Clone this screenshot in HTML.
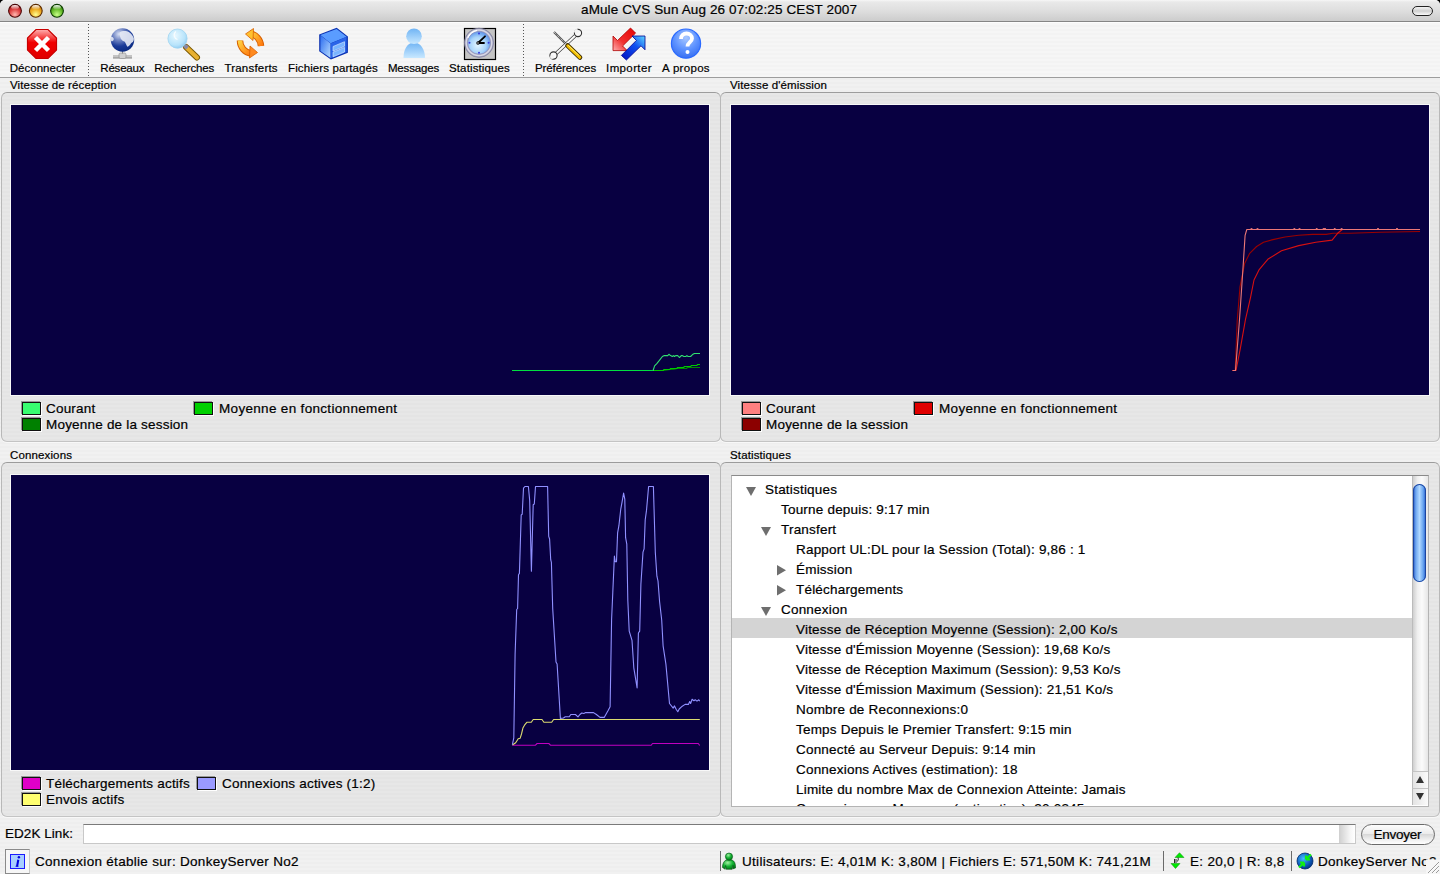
<!DOCTYPE html>
<html><head><meta charset="utf-8">
<style>
*{box-sizing:border-box;margin:0;padding:0}
html,body{width:1440px;height:874px;overflow:hidden;background:#000}
body{font-family:"Liberation Sans",sans-serif;font-size:13.5px;letter-spacing:.2px;color:#000;position:relative;-webkit-text-stroke:.2px #000}
.a{position:absolute}
#win{position:absolute;left:0;top:0;width:1440px;height:874px;background:repeating-linear-gradient(#f1f1f1 0,#f1f1f1 2px,#eeeeee 2px,#eeeeee 4px);border-radius:5px 5px 0 0;overflow:hidden}
#title{left:0;top:0;width:1440px;height:22px;background:linear-gradient(#f7f7f7 0,#e9e9e9 2px,#dedede 11px,#cecece 20px);border-bottom:1px solid #858585}
#ttxt{left:581px;top:2px;white-space:nowrap;font-size:13.5px;line-height:15px;letter-spacing:.12px}
.tl{width:14px;height:14px;border-radius:50%;top:4px}
#tool{left:0;top:22px;width:1440px;height:56px;background:repeating-linear-gradient(#f6f6f6 0,#f6f6f6 2px,#f3f3f3 2px,#f3f3f3 4px);border-top:1px solid #fdfdfd;border-bottom:1px solid #9c9c9c}
.tb{font-size:11.5px;line-height:13px;top:62px;white-space:nowrap;width:100px;text-align:center}
.sep{top:24px;height:53px;width:1px;background:repeating-linear-gradient(#555 0,#555 1px,transparent 1px,transparent 3px)}
.lbl{font-size:11.5px;line-height:13px;letter-spacing:.13px;white-space:nowrap}
.box{border:1px solid #b8b8b8;border-top-color:#9c9c9c;border-bottom-color:#c4c4c4;border-radius:6px;background:repeating-linear-gradient(#e7e7e7 0,#e7e7e7 2px,#e4e4e4 2px,#e4e4e4 4px);box-shadow:0 1px 0 #f8f8f8}
.graph{background:#080041;outline:1px solid #f8f8f8}
.row{white-space:nowrap;line-height:15px}
.leg{white-space:nowrap;line-height:15px}
.sw{width:19px;height:13px;border:1px solid #111;box-shadow:-1px -1px 0 #9a9a9a, 1px 1px 0 #fff}
</style></head><body>
<div id="win">
 <div id="title" class="a"></div>
 <div id="ttxt" class="a">aMule CVS Sun Aug 26 07:02:25 CEST 2007</div>
 <div id="tool" class="a"></div>
 <!-- traffic lights -->
 <svg class="a" style="left:0;top:0" width="72" height="22">
  <defs>
   <radialGradient id="tlR" cx=".5" cy=".8" r=".75"><stop offset="0" stop-color="#ffb8b0"/><stop offset=".55" stop-color="#e04848"/><stop offset="1" stop-color="#a81010"/></radialGradient>
   <radialGradient id="tlY" cx=".5" cy=".8" r=".75"><stop offset="0" stop-color="#ffff90"/><stop offset=".55" stop-color="#f0b028"/><stop offset="1" stop-color="#c07000"/></radialGradient>
   <radialGradient id="tlG" cx=".5" cy=".8" r=".75"><stop offset="0" stop-color="#c8ff88"/><stop offset=".55" stop-color="#6cc030"/><stop offset="1" stop-color="#2a7a00"/></radialGradient>
   <linearGradient id="tlH" x1="0" y1="0" x2="0" y2="1"><stop offset="0" stop-color="#fff" stop-opacity=".95"/><stop offset="1" stop-color="#fff" stop-opacity=".05"/></linearGradient>
  </defs>
  <circle cx="15" cy="10.8" r="6.4" fill="url(#tlR)" stroke="#4a0808" stroke-width="1.1"/>
  <circle cx="35.8" cy="10.8" r="6.4" fill="url(#tlY)" stroke="#5a2a00" stroke-width="1.1"/>
  <circle cx="57" cy="10.8" r="6.4" fill="url(#tlG)" stroke="#0a3a00" stroke-width="1.1"/>
  <ellipse cx="15" cy="7.3" rx="3.8" ry="2.2" fill="url(#tlH)"/>
  <ellipse cx="35.8" cy="7.3" rx="3.8" ry="2.2" fill="url(#tlH)"/>
  <ellipse cx="57" cy="7.3" rx="3.8" ry="2.2" fill="url(#tlH)"/>
 </svg>
 <div class="a" style="left:1412px;top:6px;width:21px;height:10px;border:1.5px solid #222;border-radius:5px;background:linear-gradient(#f4f4f4,#cfcfcf 50%,#fafafa)"></div>
 <svg class="a" style="left:0;top:0" width="720" height="64">
  <defs>
   <linearGradient id="gRed" x1="0" y1="0" x2="0" y2="1"><stop offset="0" stop-color="#ffb0b0"/><stop offset=".45" stop-color="#f00000"/><stop offset="1" stop-color="#e00000"/></linearGradient>
   <radialGradient id="gGlobe" cx=".35" cy=".25" r=".8"><stop offset="0" stop-color="#d8e0f4"/><stop offset=".35" stop-color="#6a80c0"/><stop offset=".65" stop-color="#1a3a98"/><stop offset="1" stop-color="#0a2a80"/></radialGradient>
   <radialGradient id="gLens" cx=".4" cy=".35" r=".7"><stop offset="0" stop-color="#e8f8ff"/><stop offset=".7" stop-color="#b8e4fb"/><stop offset="1" stop-color="#8cc8f0"/></radialGradient>
   <linearGradient id="gOr" x1="0" y1="0" x2="1" y2="1"><stop offset="0" stop-color="#ffd040"/><stop offset="1" stop-color="#ff7a10"/></linearGradient>
   <linearGradient id="gBlueL" x1="0" y1="0" x2="1" y2="1"><stop offset="0" stop-color="#2a6cf0"/><stop offset="1" stop-color="#b8dcff"/></linearGradient>
   <linearGradient id="gPers" x1="0" y1="0" x2="0" y2="1"><stop offset="0" stop-color="#70b4f4"/><stop offset="1" stop-color="#c8e8ff"/></linearGradient>
   <radialGradient id="gFace" cx=".45" cy=".6" r=".65"><stop offset="0" stop-color="#e4f6ff"/><stop offset=".55" stop-color="#a8d4fa"/><stop offset="1" stop-color="#4a88e8"/></radialGradient>
   <radialGradient id="gHelp" cx=".5" cy=".3" r=".7"><stop offset="0" stop-color="#a8c8ff"/><stop offset=".6" stop-color="#5a90ff"/><stop offset="1" stop-color="#3a70f0"/></radialGradient>
  </defs>
  <!-- deconnecter -->
  <path d="M36 29.5h12l8.5 8.5v12l-8.5 8.5h-12l-8.5-8.5v-12z" fill="url(#gRed)" stroke="#c80000" stroke-width="1.2"/>
  <path d="M35.5 37.5l13 13M48.5 37.5l-13 13" stroke="#fff" stroke-width="4.5"/>
  <!-- reseaux globe -->
  <rect x="113" y="55" width="19" height="3" fill="#c4c4c4"/>
  <rect x="113" y="57.5" width="19" height="1" fill="#8a8a8a"/>
  <rect x="119" y="53" width="7" height="5.5" rx="1.5" fill="#d0d0d0" stroke="#8a8a8a" stroke-width=".6"/>
  <rect x="122" y="50.5" width="1" height="3" fill="#888"/>
  <circle cx="122.5" cy="40" r="11.7" fill="url(#gGlobe)"/>
  <path d="M119.5 32.5c2-1.5 5-1.8 7.5-1.2 3 1 5.5 3.5 6.8 6.8.3 1.5-.2 3-1 4-1 .5-2 1.5-2.5 2.5-.8 1-2 2-3 2.2-1-1.5-1.5-3.5-2.5-5-1.5-.5-3-1.5-4-3-.5-1.5-1-3-1.3-4.3z M110.8 37c1.2-.5 2.5.5 3 1.8.2 1.2-.8 2.3-2 2.6-.7-.3-1-1-1.1-1.8z" fill="#e4e8f4" opacity=".92"/>
  <!-- recherches -->
  <path d="M186 47l11 10.5" stroke="#7a5800" stroke-width="6" stroke-linecap="round"/>
  <path d="M186.5 47.5l10.5 10" stroke="#e8b030" stroke-width="4.2" stroke-linecap="round"/>
  <path d="M184.5 45.5l3 2.5" stroke="#8888a8" stroke-width="4"/>
  <circle cx="177.5" cy="38.6" r="9.6" fill="url(#gLens)" stroke="#a0d4f0" stroke-width=".8"/>
  <path d="M176 31.5a4.5 4.5 0 0 0 1.5 8" stroke="#fff" stroke-width="1.2" fill="none" opacity=".8"/>
  <!-- transferts -->
  <path d="M250 33.5c6 1 10.5 6 11 12.5" stroke="#d86000" stroke-width="6.5" fill="none"/>
  <path d="M250 33.5c6 1 10.5 6 11 12.5" stroke="url(#gOr)" stroke-width="4.5" fill="none"/>
  <path d="M245.5 34l8-5.5-.5 12z" fill="#ffc030" stroke="#d86000" stroke-width=".8"/>
  <path d="M240 40.5c0 7 5 12 11 13" stroke="#d86000" stroke-width="6.5" fill="none"/>
  <path d="M240 40.5c0 7 5 12 11 13" stroke="url(#gOr)" stroke-width="4.5" fill="none"/>
  <path d="M257.5 52.5l-8 5.5.5-12z" fill="#ff8a20" stroke="#d86000" stroke-width=".8"/>
  <!-- fichiers partages -->
  <path d="M336.7 27.8l11.2 8.7v16.3l-17 6.6-11.7-8.1v-16.7z" fill="#0a30b0"/>
  <path d="M336.6 29l10 7.7-16 6.6-10.2-8.3z" fill="#5a9cff"/>
  <path d="M320.4 35.2l10.2 8.3v14.6l-10.2-7.2z" fill="url(#gBlueL)"/>
  <path d="M330.6 43.4l16-6.6v15.2l-16 6.5z" fill="#2a64e8"/>
  <path d="M333 46.5l11.5-4.8v4.6l-11.5 4.8z M333 52.2l11.5-4.8v4.6l-11.5 4.8z" fill="#7ab4ff" stroke="#e0f0ff" stroke-width=".6"/>
  <!-- messages -->
  <path d="M403.5 58c0-9 4-15.5 10.5-15.5s11 6.5 11 15.5z" fill="url(#gPers)"/>
  <circle cx="414" cy="36.3" r="7.8" fill="url(#gPers)"/>
  <!-- statistiques -->
  <rect x="464.5" y="28.5" width="31" height="31" fill="#c4c4c4" stroke="#000" stroke-width="1.2"/>
  <circle cx="479" cy="42.8" r="14.6" fill="#a4a4bc" stroke="#8080a0" stroke-width=".8"/>
  <circle cx="479" cy="42.8" r="12.8" fill="none" stroke="#d8d8e6" stroke-width="1.4"/><path d="M468 38a12 12 0 0 1 9-7.5" stroke="#fff" stroke-width="1.4" fill="none"/>
  <circle cx="479" cy="42.8" r="11.3" fill="url(#gFace)" stroke="#9090c0" stroke-width=".6"/>
  <g fill="#3a3ae0"><circle cx="479" cy="33.5" r="1"/><circle cx="479" cy="52.7" r="1"/><circle cx="469.5" cy="42.8" r="1"/><circle cx="488.6" cy="42.8" r="1"/></g>
  <path d="M478 43l7-6.7M478 43h6" stroke="#000" stroke-width="1.8" stroke-linecap="round"/>
  <circle cx="478" cy="43" r="1.7" fill="#000"/><circle cx="478" cy="43" r=".7" fill="#fff"/>
  <!-- preferences -->
  <path d="M554 32l12.5 12.5" stroke="#555" stroke-width="2.2"/>
  <path d="M554 32l12.5 12.5" stroke="#e8e8e8" stroke-width="1" stroke-dasharray="1 1"/>
  <path d="M576.5 34.5l-21.5 20" stroke="#333" stroke-width="3.4"/>
  <path d="M576.5 34.5l-21.5 20" stroke="#fafafa" stroke-width="2.2"/>
  <circle cx="578" cy="33" r="3.6" fill="#fafafa" stroke="#333" stroke-width="1.1"/>
  <circle cx="576.3" cy="31.3" r="2.2" fill="#f4f4f4"/>
  <circle cx="553.5" cy="55.5" r="3.6" fill="#fafafa" stroke="#333" stroke-width="1.1"/>
  <circle cx="552" cy="57" r="2" fill="#f4f4f4"/>
  <path d="M567.5 45.5l12.5 12" stroke="#3a2a00" stroke-width="4.6" stroke-linecap="round"/>
  <path d="M567.8 45.8l12 11.5" stroke="#f4c000" stroke-width="3" stroke-linecap="round"/>
  <path d="M568.5 45.5l10 9.5" stroke="#fff4a0" stroke-width=".8" stroke-linecap="round"/>
  <!-- importer -->
  <defs>
   <linearGradient id="gImpR" x1="1" y1="0" x2="0" y2="1"><stop offset="0" stop-color="#e80000"/><stop offset=".6" stop-color="#f03030"/><stop offset="1" stop-color="#ffb0b0"/></linearGradient>
   <linearGradient id="gImpB" x1="0" y1="1" x2="1" y2="0"><stop offset="0" stop-color="#0010c0"/><stop offset=".6" stop-color="#1050f0"/><stop offset="1" stop-color="#60d8ff"/></linearGradient>
  </defs>
  <path d="M613 50.6V36l4.5 4.5 13-12.5 5.1 5.1-13 12.9 4.6 4.6z" fill="url(#gImpR)" stroke="#b00000" stroke-width=".8"/>
  <path d="M645 36h-13l4.4 4.4-15 15 5 4.6 14.6-14.2 4 4z" fill="url(#gImpB)" stroke="#000090" stroke-width=".8"/>
  <!-- a propos -->
  <circle cx="686" cy="43.6" r="14.6" fill="url(#gHelp)" stroke="#2a6aff" stroke-width="1.2"/>
  <path d="M681 39c0-3.5 2.5-5.5 5.5-5.5s5.5 2 5.5 5c0 3.5-4.5 4-4.5 8" stroke="#fff" stroke-width="3.8" fill="none"/>
  <circle cx="687.5" cy="52" r="2" fill="#fff"/>
 </svg>
 <!-- toolbar labels -->
 <div class="a tb" style="left:-7.5px;letter-spacing:0.035px">Déconnecter</div>
 <div class="a tb" style="left:72.3px;letter-spacing:-0.2px">Réseaux</div>
 <div class="a tb" style="left:134.2px;letter-spacing:-0.15px">Recherches</div>
 <div class="a tb" style="left:201.1px;letter-spacing:0.2px">Transferts</div>
 <div class="a tb" style="left:283px;letter-spacing:0.1px">Fichiers partagés</div>
 <div class="a tb" style="left:363.5px;letter-spacing:-0.15px">Messages</div>
 <div class="a tb" style="left:429.5px;letter-spacing:0.13px">Statistiques</div>
 <div class="a tb" style="left:515.5px;letter-spacing:-0.08px">Préférences</div>
 <div class="a tb" style="left:579px;letter-spacing:0.38px">Importer</div>
 <div class="a tb" style="left:636px;letter-spacing:0.3px">A propos</div>
 <div class="a sep" style="left:88px"></div>
 <div class="a sep" style="left:523px"></div>
 <!-- section labels -->
 <div class="a lbl" style="left:10px;top:79px">Vitesse de réception</div>
 <div class="a lbl" style="left:730px;top:79px">Vitesse d'émission</div>
 <div class="a lbl" style="left:10px;top:449px">Connexions</div>
 <div class="a lbl" style="left:730px;top:449px">Statistiques</div>
 <!-- boxes -->
 <div class="a box" style="left:1px;top:92px;width:720px;height:350px"></div>
 <div class="a box" style="left:720px;top:92px;width:720px;height:350px"></div>
 <div class="a box" style="left:1px;top:462px;width:720px;height:355px"></div>
 <div class="a box" style="left:720px;top:462px;width:720px;height:355px"></div>
 <div class="a graph" style="left:11px;top:105px;width:698px;height:290px"></div>
 <div class="a graph" style="left:731px;top:105px;width:698px;height:290px"></div>
 <div class="a graph" style="left:11px;top:475px;width:698px;height:295px"></div>
 <!-- legends -->
 <div class="a sw" style="left:22px;top:402px;background:#38fd70"></div>
 <div class="a leg" style="left:46px;top:401px">Courant</div>
 <div class="a sw" style="left:22px;top:418px;background:#008000"></div>
 <div class="a leg" style="left:46px;top:417px">Moyenne de la session</div>
 <div class="a sw" style="left:194px;top:402px;background:#00d000"></div>
 <div class="a leg" style="left:219px;top:401px;letter-spacing:.32px">Moyenne en fonctionnement</div>

 <div class="a sw" style="left:742px;top:402px;background:#ff8080"></div>
 <div class="a leg" style="left:766px;top:401px">Courant</div>
 <div class="a sw" style="left:742px;top:418px;background:#8c0000"></div>
 <div class="a leg" style="left:766px;top:417px">Moyenne de la session</div>
 <div class="a sw" style="left:914px;top:402px;background:#e00000"></div>
 <div class="a leg" style="left:939px;top:401px;letter-spacing:.32px">Moyenne en fonctionnement</div>

 <div class="a sw" style="left:22px;top:777px;background:#e000c8"></div>
 <div class="a leg" style="left:46px;top:776px">Téléchargements actifs</div>
 <div class="a sw" style="left:22px;top:793px;background:#ffff70"></div>
 <div class="a leg" style="left:46px;top:792px">Envois actifs</div>
 <div class="a sw" style="left:197px;top:777px;background:#9a9aff"></div>
 <div class="a leg" style="left:222px;top:776px">Connexions actives (1:2)</div>
 <svg class="a" style="left:0;top:0" width="1440" height="874" fill="none" stroke-width="1.1" stroke-linejoin="round">
  <!-- reception -->
  <polyline stroke="#008a00" points="512,370.5 663.3,370.5 670.1,369.5 674,369.3 677.4,368.5 686.7,368.5 687.2,367.5 700,367.5"/>
  <polyline stroke="#00c800" points="512,370.5 663.3,370.5 663.8,369.5 669.7,369.5 670.4,368.5 677,368.5 677.4,367.5 683.8,367.5 684.2,366.5 690.8,366.5 691.3,365.5 696.9,365.5 697.4,364.5 700,364.5"/>
  <polyline stroke="#30e070" points="512,370.5 653.1,370.5 654.6,365.8 657,363.3 659.4,360.4 662.4,356.5 664.3,355.6 667.7,355.6 668.9,354.3 670.6,355.6 672.3,356.5 673.5,355.6 674.5,356.5 675.7,355.6 677.7,355.6 679.4,357.5 681.3,355.6 682.5,355.6 683.8,356.5 685.7,356.5 686.9,355.6 688.1,356.5 690.6,356.5 692.5,354.6 694.4,353.5 700,353.5"/>
  <polyline stroke="#00e040" points="512,370.5 653,370.5"/>
  <!-- emission -->
  <polyline stroke="#9a0000" points="1232.5,370.5 1235.2,370.5 1237.2,321 1240,286.8 1244.6,263.6 1249.7,253.3 1256.6,246.5 1263.5,242.2 1272.9,239.6 1284.9,237 1298.7,235.3 1312.4,234.4 1326.1,234.4 1333,233.2 1350,233.2 1380,232.3 1420,231.5"/>
  <polyline stroke="#d81010" points="1232.5,370.5 1236,370.5 1240.3,348.6 1245.5,319.4 1250.6,297.1 1254,280 1259.2,269.6 1267.8,259.3 1281.5,250.8 1298.7,245.6 1315.8,242.2 1332.1,240.1 1338.2,232.7 1342.4,229.5 1420,229.5"/>
  <polyline stroke="#ec7878" points="1232.5,370.5 1235.5,370.5 1239.4,321 1242.9,269.6 1245.1,235.3 1246.8,229.5 1420,229.5"/>
  <g stroke="#ec7878" stroke-width="1">
   <path d="M1250.5 229.5l1-1.5 1 1.5M1256.5 229.5l1-1.5 1 1.5M1293.4 229.5l1-1.5 1 1.5M1298.5 229.5l1-1.5 1 1.5M1315.7 229.5l1-1.5 1 1.5M1322.6 229.5l1-1.5 1 1.5M1324 229.5l1-1.5 1 1.5M1333.7 229.5l1-1.5 1 1.5M1340.6 229.5l1-1.5 1 1.5M1377 229.5l1-1.5 1 1.5M1396 229.5l1-1.5 1 1.5"/>
  </g>
  <!-- connexions -->
  <polyline stroke="#c000c0" points="512.4,745.3 535.2,745.3 537.1,743.5 548.8,743.5 550.7,745.3 651.2,745.3 652.5,743.5 698.3,743.5 699.7,745.5"/>
  <polyline stroke="#dcdc70" points="512.4,745 515.7,742.7 518.2,738.8 520.2,738.2 521.5,734 522.9,728.1 524.5,725.2 526.8,722.3 531.3,722.3 533.2,719.5 542,719.5 543.9,722.3 551.7,722.3 553.6,719.5 699.8,719.5"/>
  <polyline stroke="#9090ff" points="512.4,744.7 513.8,737.9 515.1,654.2 516.7,609.5 517.6,608.5 518.5,574.8 519.4,573.4 521.2,515 522.2,514.3 523.5,488.2 524.9,486.5 528.4,486.5 529.7,500.6 531.4,571.3 533.2,504.7 534.3,504 535.5,486.5 547.6,486.5 548.7,536.3 549.6,539 550.7,559.7 551.4,562.4 552.7,608.5 556,662 557.1,664 560.4,718.4 563.4,718 565.3,716.8 569.2,716.8 570.8,714.5 575.4,714.5 578,716.8 579.9,714.5 581.8,713 583.8,713.5 585.7,712.6 593.5,712.6 596.4,714.5 600,717.4 604.2,717.4 608.1,710.6 610.1,706.7 611.6,619.2 612.8,592.2 614.4,556.1 615.2,561.7 616.5,561.7 617.6,532.9 618.9,525.7 620.8,508.8 622,502.4 623.6,493.1 624.8,499.2 625.6,537.7 626.8,544.1 627.8,600 629.2,631.1 632,640.3 633.8,667.8 637.1,687.9 638.4,633 639.7,631.1 640.9,584.2 643,552.1 644.1,548.9 645.2,520 646.5,510.4 648.6,486.5 653.4,486.5 655.3,552.1 656.9,576.2 658,581 659.6,601.8 661.7,620 663.1,645.8 665.9,664.1 669.5,703.5 673.2,708.1 674.5,705.9 676.3,709.5 677.8,711.7 679.2,709 682.3,706.2 685.1,704.4 688.4,704.4 689.7,701.6 690.6,703.5 692.1,699.3 693.9,700.7 695.2,699.8 697,701.1 698.8,699.8 699.7,701.1"/>
 </svg>
 <!-- tree view -->
 <div class="a" id="tree" style="left:731px;top:475px;width:698px;height:332px;background:#fff;border:1px solid #b4b4b4;border-top-color:#8a8a8a;overflow:hidden">
  <div class="a" style="left:0;top:142px;width:680px;height:20px;background:#d4d4d4"></div>
  <div class="a row" style="top:6px;left:33px">Statistiques</div>
  <div class="a row" style="top:26px;left:49px">Tourne depuis: 9:17 min</div>
  <div class="a row" style="top:46px;left:49px">Transfert</div>
  <div class="a row" style="top:66px;left:64px">Rapport UL:DL pour la Session (Total): 9,86 : 1</div>
  <div class="a row" style="top:86px;left:64px">Émission</div>
  <div class="a row" style="top:106px;left:64px">Téléchargements</div>
  <div class="a row" style="top:126px;left:49px">Connexion</div>
  <div class="a row" style="top:146px;left:64px">Vitesse de Réception Moyenne (Session): 2,00 Ko/s</div>
  <div class="a row" style="top:166px;left:64px">Vitesse d'Émission Moyenne (Session): 19,68 Ko/s</div>
  <div class="a row" style="top:186px;left:64px">Vitesse de Réception Maximum (Session): 9,53 Ko/s</div>
  <div class="a row" style="top:206px;left:64px">Vitesse d'Émission Maximum (Session): 21,51 Ko/s</div>
  <div class="a row" style="top:226px;left:64px">Nombre de Reconnexions:0</div>
  <div class="a row" style="top:246px;left:64px">Temps Depuis le Premier Transfert: 9:15 min</div>
  <div class="a row" style="top:266px;left:64px">Connecté au Serveur Depuis: 9:14 min</div>
  <div class="a row" style="top:286px;left:64px">Connexions Actives (estimation): 18</div>
  <div class="a row" style="top:306px;left:64px">Limite du nombre Max de Connexion Atteinte: Jamais</div>
  <div class="a row" style="top:325px;left:64px">Connexions en Moyenne (estimation): 20,0345</div>
  <svg class="a" style="left:0;top:0" width="698" height="331">
   <g fill="#6e6e6e">
    <path d="M14 11h10l-5 9z"/>
    <path d="M29 51h10l-5 9z"/>
    <path d="M29 131h10l-5 9z"/>
    <path d="M45 89v10.5l9-5.25z"/>
    <path d="M45 109v10.5l9-5.25z"/>
   </g>
  </svg>
  <!-- scrollbar -->
  <div class="a" style="left:680px;top:0;width:16px;height:329px;background:linear-gradient(90deg,#cfcfcf,#efefef 30%,#fbfbfb 60%,#e6e6e6);border-left:1px solid #bbb"></div>
  <div class="a" style="left:681px;top:8px;width:13px;height:98px;border-radius:6.5px;background:linear-gradient(90deg,#1e50c0,#70a8f0 22%,#b0d8ff 50%,#68a4f0 78%,#2058c8);box-shadow:inset 0 0 0 1px #1a44a0"></div>
  <div class="a" style="left:680px;top:295px;width:16px;height:17px;border-top:1px solid #c4c4c4;border-left:1px solid #bbb;background:linear-gradient(90deg,#e4e4e4,#fbfbfb)"></div>
  <div class="a" style="left:680px;top:312px;width:16px;height:17px;border-top:1px solid #c4c4c4;border-left:1px solid #bbb;background:linear-gradient(90deg,#e4e4e4,#fbfbfb)"></div>
  <svg class="a" style="left:680px;top:295px" width="16" height="34"><path d="M4 12h8l-4-7z M4 22h8l-4 7z" fill="#333"/></svg>
 </div>
 <!-- ED2K -->
 <div class="a" style="left:5px;top:826px;letter-spacing:.05px">ED2K Link:</div>
 <div class="a" style="left:83px;top:824px;width:1273px;height:20px;background:#fff;border:1px solid #c8c8c8;border-top-color:#7a7a7a"></div>
 <div class="a" style="left:1339px;top:825px;width:16px;height:18px;background:linear-gradient(90deg,#cfcfcf,#f6f6f6 70%,#fff)"></div>
 <div class="a" style="left:1361px;top:824px;width:74px;height:21px;border:1px solid #6a6a6a;border-radius:10.5px;background:linear-gradient(#fdfdfd,#ececec 45%,#d8d8d8 50%,#f2f2f2 80%,#fff)"></div>
 <div class="a" style="left:1373.5px;top:826.5px;letter-spacing:-.25px">Envoyer</div>
 <!-- status bar -->
 <div class="a" style="left:5px;top:849px;width:25px;height:25px;border:1px solid #8a8a8a;border-right-color:#c8c8c8;background:#f6f6f6"></div>
 <div class="a" style="left:10px;top:854px;width:15px;height:15px;background:#a8ceff;border:1px solid #1a1aff"></div>
 <svg class="a" style="left:10px;top:854px" width="15" height="15"><circle cx="8.9" cy="3.3" r="1.2" fill="#0000e0"/><path d="M8.3 5.8l-1.2 6.4" stroke="#0000e0" stroke-width="2.1"/><path d="M5.6 12.3h2.8" stroke="#0000e0" stroke-width="1"/></svg>
 <div class="a" style="letter-spacing:.3px;left:35px;top:854px">Connexion établie sur: DonkeyServer No2</div>
 <div class="a" style="left:720px;top:851px;width:1px;height:20px;background:#6a6a6a"></div>
 <div class="a" style="letter-spacing:.3px;left:742px;top:854px">Utilisateurs: E: 4,01M K: 3,80M | Fichiers E: 571,50M K: 741,21M</div>
 <div class="a" style="left:1163px;top:851px;width:1px;height:20px;background:#6a6a6a"></div>
 <div class="a" style="letter-spacing:.3px;left:1190px;top:854px">E: 20,0 | R: 8,8</div>
 <div class="a" style="left:1291px;top:851px;width:1px;height:20px;background:#6a6a6a"></div>
 <div class="a" style="letter-spacing:.3px;left:1318px;top:854px;width:122px;overflow:hidden;white-space:nowrap">DonkeyServer No2</div>
 <svg class="a" style="left:0;top:846px" width="1440" height="28">
  <defs>
   <radialGradient id="gUser" cx=".4" cy=".3" r=".8"><stop offset="0" stop-color="#a0f0a0"/><stop offset=".5" stop-color="#10b030"/><stop offset="1" stop-color="#006a10"/></radialGradient>
   <radialGradient id="gSrv" cx=".4" cy=".35" r=".7"><stop offset="0" stop-color="#40c0ff"/><stop offset=".6" stop-color="#1060c0"/><stop offset="1" stop-color="#003080"/></radialGradient>
  </defs>
  <!-- user -->
  <path d="M722.5 21.5c0-3.5 1-6 3.5-7.5h6c2.5 1 3.5 3.5 3.5 7v1l-2.5 .8v-3.5l-.8 4h-6l-.6-3.8-.4 3.8z" fill="url(#gUser)" stroke="#005010" stroke-width=".6"/>
  <circle cx="729" cy="10.6" r="3.6" fill="url(#gUser)" stroke="#005010" stroke-width=".6"/>
  <!-- arrows -->
  <path d="M1175 11.5l4.5-4.8 4.5 4.8z" fill="#00e800" stroke="#009000" stroke-width=".5"/>
  <path d="M1171 17.5h9l-4.5 5z" fill="#00e800" stroke="#009000" stroke-width=".5"/>
  <path d="M1174.5 13v4M1176 13v4M1178 11.5c.5 2 .5 3-1 4" stroke="#111" stroke-width=".9" fill="none"/>
  <!-- server globe -->
  <circle cx="1305" cy="15" r="8" fill="url(#gSrv)" stroke="#002a6a" stroke-width=".8"/>
  <path d="M1306 13.5l5-5M1306 13.5h4M1306 13.5v-4M1304 16.5l-5 5M1304 16.5h-4M1304 16.5v4" stroke="#10f010" stroke-width="2.2"/>
  <!-- resize grip -->
  <rect x="1426" y="13.5" width="14" height="15" fill="#f6f6f6"/>
  <path d="M1428 27l11-11M1432 27l7-7M1436 27l3-3" stroke="#9a9a9a" stroke-width="1"/>
  <path d="M1429 27l10-10M1433 27l6-6" stroke="#fff" stroke-width=".8"/>
 </svg>
</div>
</body></html>
